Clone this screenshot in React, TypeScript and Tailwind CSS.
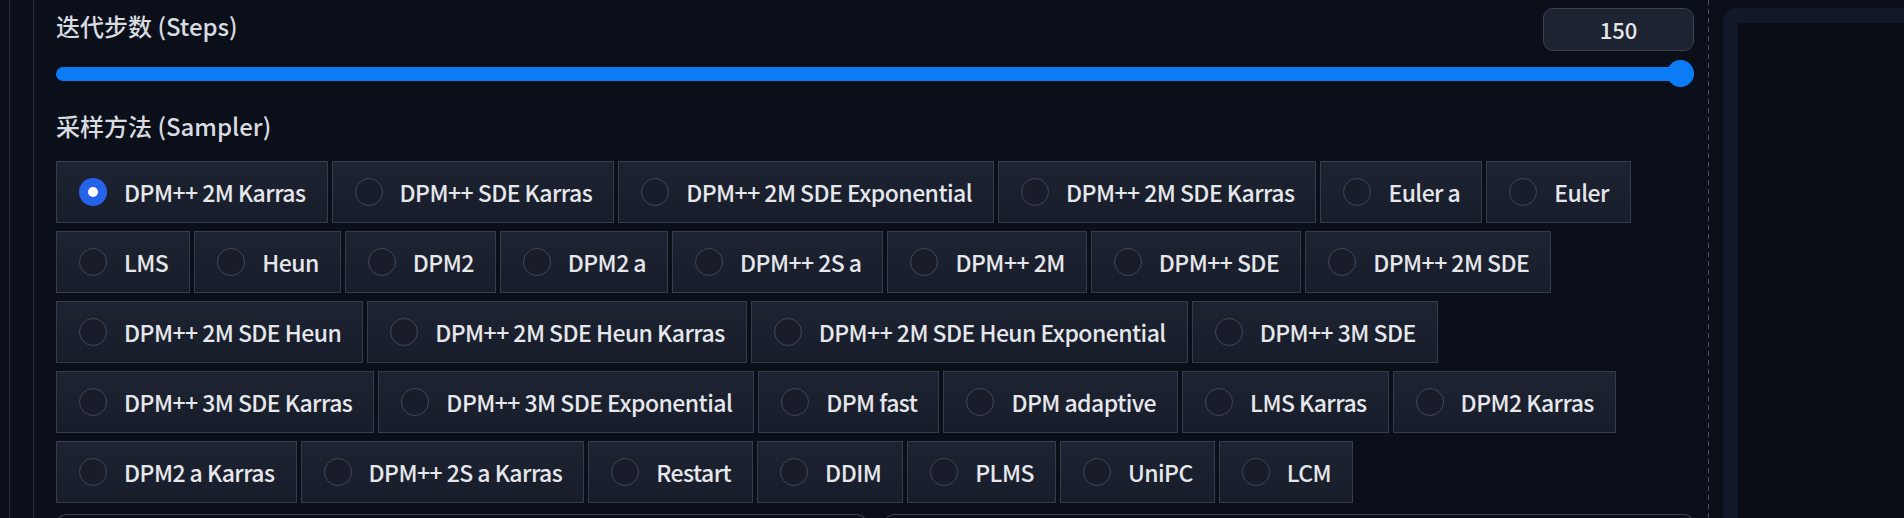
import React from "react";

const rows: string[] = [
  "DPM++ 2M Karras",
  "DPM++ SDE Karras",
  "DPM++ 2M SDE Exponential",
  "DPM++ 2M SDE Karras",
  "Euler a",
  "Euler",
  "LMS",
  "Heun",
  "DPM2",
  "DPM2 a",
  "DPM++ 2S a",
  "DPM++ 2M",
  "DPM++ SDE",
  "DPM++ 2M SDE",
  "DPM++ 2M SDE Heun",
  "DPM++ 2M SDE Heun Karras",
  "DPM++ 2M SDE Heun Exponential",
  "DPM++ 3M SDE",
  "DPM++ 3M SDE Karras",
  "DPM++ 3M SDE Exponential",
  "DPM fast",
  "DPM adaptive",
  "LMS Karras",
  "DPM2 Karras",
  "DPM2 a Karras",
  "DPM++ 2S a Karras",
  "Restart",
  "DDIM",
  "PLMS",
  "UniPC",
  "LCM",
];

function SamplerOption({ name, checked }: { name: string; checked: boolean }) {
  return (
    <label className="flex h-[62px] items-center gap-[17px] border border-[#353c4a] bg-gradient-to-b from-[#1d2332] to-[#181d2a] pl-[22px] pr-[21px]">
      {checked ? (
        <span className="flex h-[28px] w-[28px] items-center justify-center rounded-full bg-[#2563eb]">
          <span className="h-[10px] w-[10px] rounded-full bg-white" />
        </span>
      ) : (
        <span className="h-[28px] w-[28px] rounded-full border border-[#414857] bg-[#181d29]" />
      )}
      <span className="text-[23px] font-medium tracking-[-0.55px] text-[#e5e7eb]">{name}</span>
    </label>
  );
}

export default function App() {
  const selected = "DPM++ 2M Karras";

  return (
    <div
      className="flex h-[518px] w-[1904px] overflow-hidden bg-[#0b0f19]"
      style={{ fontFamily: '"Noto Sans CJK SC", "Noto Sans", sans-serif' }}
    >
      {/* left gutter lines */}
      <div className="w-[9px]" />
      <div className="w-px bg-[#262b36]" />
      <div className="w-[23px]" />
      <div className="w-px bg-[#262b36]" />

      {/* main column */}
      <div className="ml-[22px] flex w-[1638px] flex-col pt-[8px]">
        <div className="flex h-[43px] items-start justify-between">
          <span className="pt-[1px] text-[24px] leading-[34px] font-medium text-[#d8dbe0]">迭代步数 (Steps)</span>
          <div className="flex h-[43px] w-[151px] items-center justify-center rounded-[10px] border border-[#3a414f] bg-[#1d2330] text-[22px] font-medium text-[#e5e7eb]">
            150
          </div>
        </div>

        <div className="mt-[9px] flex h-[27px] items-center">
          <div className="h-[14px] flex-1 rounded-full bg-[#0b7cf6]" />
          <div className="-ml-[27px] h-[27px] w-[27px] rounded-full bg-[#0b7cf6]" />
        </div>

        <span className="mt-[22px] text-[24px] leading-[34px] font-medium text-[#d8dbe0]">采样方法 (Sampler)</span>

        <div className="mt-[18px] flex flex-wrap gap-x-[4px] gap-y-[8px]">
          {rows.map((r) => (
            <SamplerOption key={r} name={r} checked={r === selected} />
          ))}
        </div>

        <div className="mt-[11px] grid grid-cols-2 gap-[17px]">
          <div className="h-[40px] rounded-t-[10px] border-x border-t border-[#3a414f]" />
          <div className="h-[40px] rounded-t-[10px] border-x border-t border-[#3a414f]" />
        </div>
      </div>

      {/* dashed divider */}
      <div className="ml-[14px] w-px bg-[repeating-linear-gradient(to_bottom,#4b5263_0_5px,transparent_5px_9px)]" />

      {/* right panel */}
      <div className="ml-[14px] mt-[8px] flex-1 rounded-tl-[14px] border-l-[15px] border-t-[15px] border-[#111827] bg-[#0a0d16]" />
    </div>
  );
}
